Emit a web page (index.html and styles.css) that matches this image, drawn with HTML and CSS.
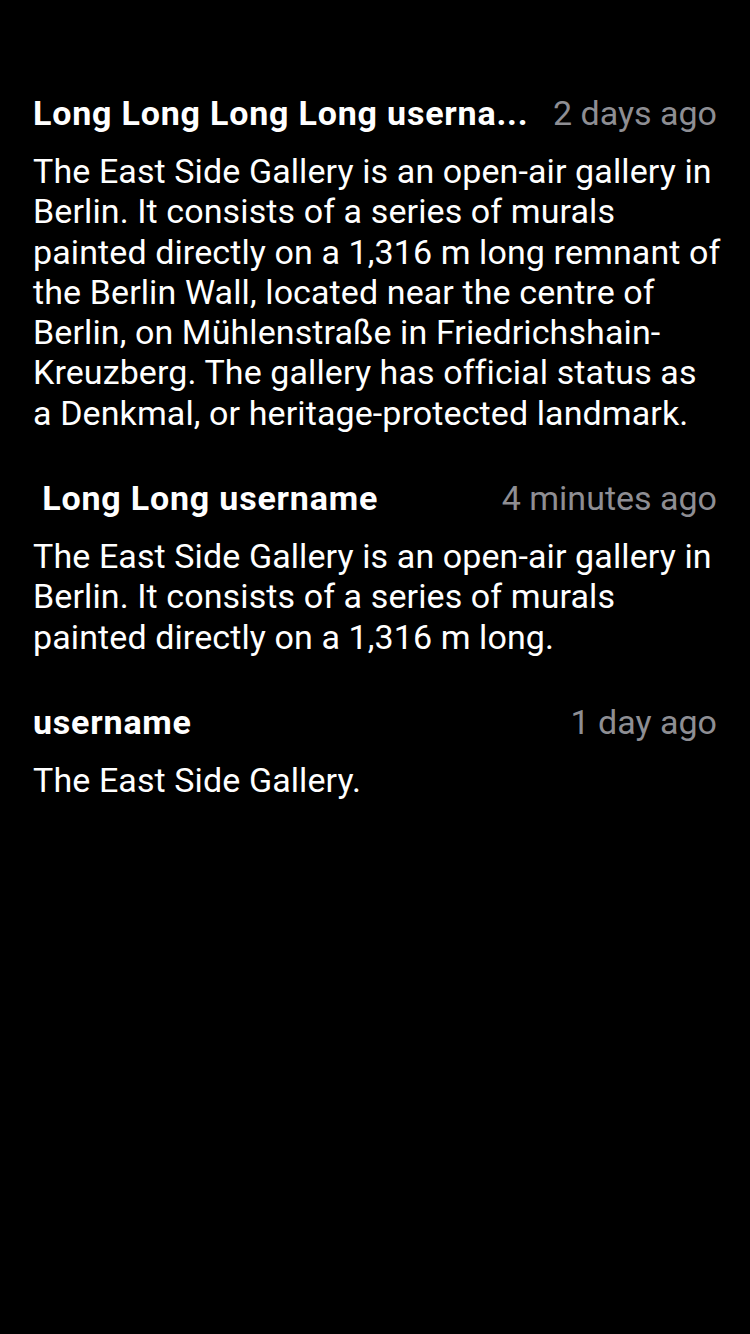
FILE: index.html
```html
<!DOCTYPE html>
<html>
<head>
<meta charset="utf-8">
<link rel="stylesheet" href="styles.css">
</head>
<body>
<div class="list">
  <div class="comment">
    <div class="head">
      <span class="user">Long Long Long Long userna...</span>
      <span class="time">2 days ago</span>
    </div>
    <p class="text">The East Side Gallery is an open-air gallery in<br>Berlin. It consists of a series of murals<br>painted directly on a 1,316 m long remnant of<br>the Berlin Wall, located near the centre of<br>Berlin, on Mühlenstraße in Friedrichshain-<br>Kreuzberg. The gallery has official status as<br>a Denkmal, or heritage-protected landmark.</p>
  </div>
  <div class="comment">
    <div class="head">
      <span class="user">&nbsp;Long Long username</span>
      <span class="time">4 minutes ago</span>
    </div>
    <p class="text">The East Side Gallery is an open-air gallery in<br>Berlin. It consists of a series of murals<br>painted directly on a 1,316 m long.</p>
  </div>
  <div class="comment">
    <div class="head">
      <span class="user">username</span>
      <span class="time">1 day ago</span>
    </div>
    <p class="text">The East Side Gallery.</p>
  </div>
</div>
</body>
</html>
```
FILE: styles.css
```css
html, body {
  margin: 0;
  padding: 0;
  background: #000;
}
body {
  width: 750px;
  height: 1334px;
  font-family: Roboto, "Liberation Sans", sans-serif;
  color: #fff;
}
.list {
  padding: 88px 33px 0 33px;
  display: flex;
  flex-direction: column;
  gap: 40px;
}
.head {
  display: flex;
  justify-content: space-between;
  align-items: center;
  height: 50px;
  gap: 24px;
}
.user {
  font-weight: 700;
  font-size: 34px;
  letter-spacing: 0.8px;
  white-space: nowrap;
}
.time {
  font-size: 34px;
  color: #8e8e93;
  white-space: nowrap;
}
.text {
  margin: 0;
  font-size: 34px;
  letter-spacing: 0.1px;
  line-height: 40.3px;
  padding-top: 13px;
  white-space: nowrap;
}
```
